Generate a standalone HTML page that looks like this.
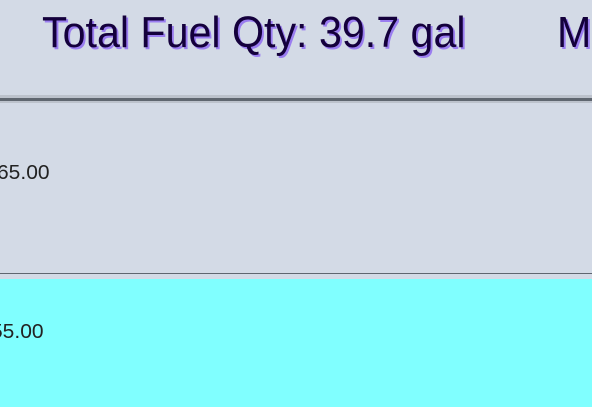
<html><head><style>
body{margin:0;width:592px;height:407px;overflow:hidden;background:#d3dae6;font-family:"Liberation Sans",sans-serif;position:relative}
.t{position:absolute;white-space:nowrap;transform-origin:0 0}
</style></head><body>
<div class="t" style="left:42px;top:8px;font-size:44px;color:#14003c;text-shadow:2px 2px 0 #9a7df0;transform:scaleX(0.936)">Total Fuel Qty: 39.7 gal</div>
<div class="t" style="left:557px;top:8px;font-size:44px;color:#14003c;text-shadow:2px 2px 0 #9a7df0;transform:scaleX(0.936)">M</div>
<div style="position:absolute;left:0;top:95px;width:592px;height:8px;background:#bcc2cc"></div>
<div style="position:absolute;left:0;top:98px;width:592px;height:3px;background:#5f6670"></div>
<div class="t" style="left:-3px;top:162px;font-size:20px;color:#222;transform:scaleX(1.05)">65.00</div>
<div style="position:absolute;left:0;top:273px;width:592px;height:1px;background:#5f6670"></div>
<div style="position:absolute;left:0;top:274px;width:592px;height:5px;background:#d3dae6"></div>
<div style="position:absolute;left:0;top:279px;width:592px;height:128px;background:#80ffff"></div>
<div class="t" style="left:-9px;top:321px;font-size:20px;color:#222;transform:scaleX(1.05)">55.00</div>
</body></html>
